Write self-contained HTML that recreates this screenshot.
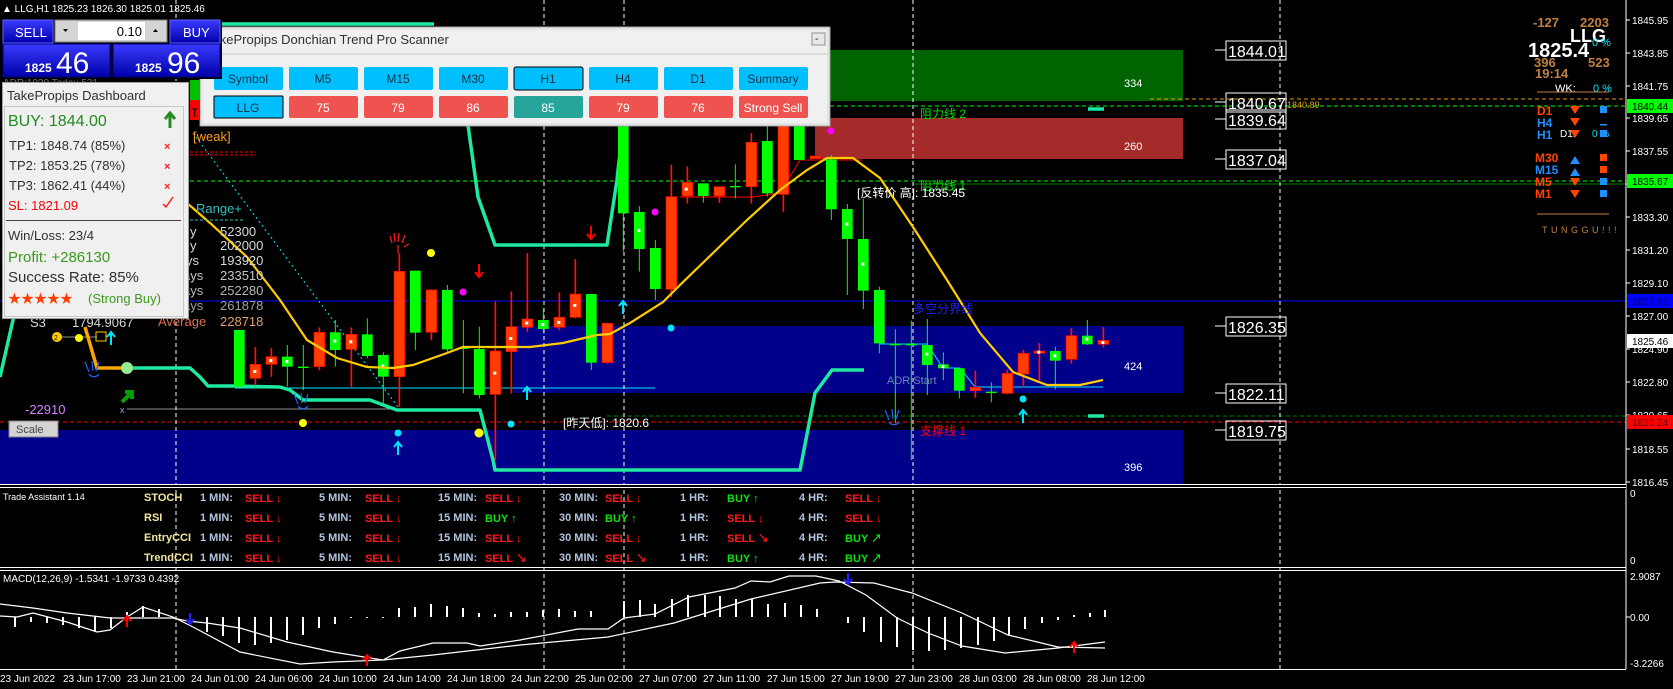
<!DOCTYPE html>
<html><head><meta charset="utf-8"><style>
html,body{margin:0;padding:0;background:#000;}
svg{display:block;}
text{font-family:"Liberation Sans","Noto Sans CJK SC",sans-serif;}
</style></head><body>
<svg width="1673" height="689" viewBox="0 0 1673 689" xmlns="http://www.w3.org/2000/svg">
<rect width="1673" height="689" fill="#000"/>

<rect x="200" y="50" width="983" height="51" fill="#006400"/>
<rect x="815" y="118" width="368" height="41" fill="#a52a2a"/>
<rect x="513" y="326" width="670" height="67" fill="#00008b"/>
<rect x="0" y="430" width="1183" height="54" fill="#00008b"/>
<g font-size="11" fill="#fff"><text x="1124" y="87">334</text><text x="1124" y="150">260</text><text x="1124" y="370">424</text><text x="1124" y="471">396</text></g>

<line x1="0" y1="301" x2="1626" y2="301" stroke="#0000ff" stroke-width="1"/>
<line x1="190" y1="181" x2="1626" y2="181" stroke="#00ff00" stroke-dasharray="4,3"/>
<line x1="913" y1="184" x2="1626" y2="184" stroke="#008000"/>
<line x1="830" y1="106" x2="1626" y2="106" stroke="#00ff00" stroke-dasharray="4,3"/>
<line x1="1150" y1="99" x2="1626" y2="99" stroke="#e0a000" stroke-dasharray="4,3"/>
<line x1="0" y1="422" x2="1626" y2="422" stroke="#ff0000" stroke-dasharray="4,3"/>
<line x1="607" y1="416" x2="1626" y2="416" stroke="#008000" stroke-dasharray="4,3"/>
<line x1="190" y1="152" x2="256" y2="152" stroke="#ff0000" stroke-dasharray="3,2"/>
<line x1="190" y1="155" x2="256" y2="155" stroke="#ff0000" stroke-dasharray="3,2"/>
<line x1="127" y1="409" x2="397" y2="409" stroke="#909090"/>
<line x1="62" y1="337" x2="97" y2="337" stroke="#909090"/>
<line x1="235" y1="388" x2="655" y2="388" stroke="#00e5ff"/>
<polyline points="880,344 927,344 943,368 960,368 975,387 1103,387" fill="none" stroke="#00e5ff"/>
<polyline points="680,197 753,197 780,193 800,160 862,160" fill="none" stroke="#ff0000"/>
<line x1="193" y1="133" x2="398" y2="407" stroke="#00e5ff" stroke-dasharray="2,3"/>

<g stroke="#fff" stroke-dasharray="4,3">
<line x1="176" y1="0" x2="176" y2="669"/><line x1="544" y1="0" x2="544" y2="669"/>
<line x1="624" y1="0" x2="624" y2="669"/><line x1="913" y1="0" x2="913" y2="669"/>
<line x1="1280" y1="0" x2="1280" y2="669"/></g>

<g fill="none" stroke="#1de9a0" stroke-width="3.5" stroke-linejoin="round">
<polyline points="0,377 13,320 22,260"/>
<polyline points="127,368 190,368 200,377 208,386 233,386 280,387 290,390 303,400 370,400 397,410 480,410 493,460 495,470 800,470 802,460 815,393 832,370 864,370"/>
<polyline points="468,125 478,197 495,245 607,245 617,180 623,125"/>
<line x1="222" y1="24" x2="434" y2="24"/>
<line x1="1088" y1="109" x2="1104" y2="109"/><line x1="1088" y1="416" x2="1104" y2="416"/>
</g>
<polyline points="85,327 97,368 127,368" fill="none" stroke="#ffa500" stroke-width="3.5"/>
<circle cx="127" cy="368" r="6" fill="#90ee90"/>

<g transform="translate(180,100) scale(0.33333)">
<g fill="#00ff00">
<rect x="162" y="690" width="32" height="170"/>
<rect x="320.5" y="735" width="3" height="125"/><rect x="306" y="770" width="32" height="30"/>
<rect x="368.5" y="735" width="3" height="135"/><rect x="354" y="800" width="32" height="4"/>
<rect x="464.5" y="660" width="3" height="140"/><rect x="450" y="697" width="32" height="53"/>
<rect x="560.5" y="655" width="3" height="120"/><rect x="546" y="703" width="32" height="65"/>
<rect x="608.5" y="757" width="3" height="153"/><rect x="594" y="765" width="32" height="65"/>
<rect x="704.5" y="512" width="3" height="238"/><rect x="690" y="512" width="32" height="186"/>
<rect x="800.5" y="555" width="3" height="200"/><rect x="786" y="570" width="32" height="178"/>
<rect x="848.5" y="660" width="3" height="220"/><rect x="834" y="743" width="32" height="4"/>
<rect x="896.5" y="680" width="3" height="215"/><rect x="882" y="747" width="32" height="138"/>
<rect x="1088.5" y="625" width="3" height="75"/><rect x="1074" y="660" width="32" height="27"/>
<rect x="1232.5" y="582" width="3" height="228"/><rect x="1218" y="582" width="32" height="206"/>
<rect x="1328.5" y="75" width="3" height="380"/><rect x="1314" y="75" width="32" height="265"/>
<rect x="1376.5" y="318" width="3" height="197"/><rect x="1362" y="336" width="32" height="111"/>
<rect x="1424.5" y="420" width="3" height="180"/><rect x="1410" y="444" width="32" height="123"/>
</g>
<g fill="#ff3d00" stroke="#ff0000" stroke-width="2">
<rect x="224.5" y="742" width="3" height="113"/><rect x="210" y="793" width="32" height="42"/>
<rect x="272.5" y="745" width="3" height="85"/><rect x="258" y="770" width="32" height="23"/>
<rect x="416.5" y="683" width="3" height="127"/><rect x="402" y="697" width="32" height="103"/>
<rect x="512.5" y="683" width="3" height="177"/><rect x="498" y="703" width="32" height="45"/>
<rect x="656.5" y="460" width="3" height="460"/><rect x="642" y="514" width="32" height="316"/>
<rect x="752.5" y="568" width="3" height="152"/><rect x="738" y="570" width="32" height="127"/>
<rect x="944.5" y="605" width="3" height="475"/><rect x="930" y="753" width="32" height="130"/>
<rect x="992.5" y="575" width="3" height="305"/><rect x="978" y="680" width="32" height="75"/>
<rect x="1040.5" y="460" width="3" height="235"/><rect x="1026" y="657" width="32" height="25"/>
<rect x="1136.5" y="578" width="3" height="112"/><rect x="1122" y="652" width="32" height="30"/>
<rect x="1184.5" y="478" width="3" height="177"/><rect x="1170" y="582" width="32" height="70"/>
<rect x="1280.5" y="668" width="3" height="122"/><rect x="1266" y="670" width="32" height="118"/>
<rect x="1472.5" y="195" width="3" height="395"/><rect x="1458" y="290" width="32" height="278"/>
</g>
<g fill="#fff"><rect x="220" y="810" width="9" height="9"/><rect x="268" y="777" width="9" height="9"/><rect x="316" y="780" width="9" height="9"/><rect x="460" y="719" width="9" height="9"/><rect x="508" y="721" width="9" height="9"/><rect x="604" y="793" width="9" height="9"/><rect x="940" y="815" width="9" height="9"/><rect x="988" y="711" width="9" height="9"/><rect x="1036" y="665" width="9" height="9"/><rect x="1084" y="669" width="9" height="9"/><rect x="1132" y="663" width="9" height="9"/><rect x="1180" y="612" width="9" height="9"/><rect x="1372" y="387" width="9" height="9"/></g>
</g>

<g transform="translate(680,100) scale(0.33333)">
<g fill="#00ff00">
<rect x="68.5" y="250" width="3" height="58"/><rect x="54" y="250" width="32" height="38"/>
<rect x="164.5" y="193" width="3" height="102"/><rect x="150" y="258" width="32" height="4"/>
<rect x="260.5" y="75" width="3" height="215"/><rect x="246" y="123" width="32" height="157"/>
<rect x="356.5" y="75" width="3" height="105"/><rect x="342" y="75" width="32" height="105"/>
<rect x="452.5" y="165" width="3" height="195"/><rect x="438" y="178" width="32" height="150"/>
<rect x="500.5" y="312" width="3" height="273"/><rect x="486" y="327" width="32" height="90"/>
<rect x="548.5" y="297" width="3" height="330"/><rect x="534" y="417" width="32" height="155"/>
<rect x="596.5" y="560" width="3" height="200"/><rect x="582" y="570" width="32" height="160"/>
<rect x="644.5" y="688" width="3" height="282"/><rect x="630" y="731" width="32" height="5"/>
<rect x="692.5" y="662" width="3" height="418"/><rect x="678" y="731" width="32" height="5"/>
<rect x="740.5" y="657" width="3" height="228"/><rect x="726" y="735" width="32" height="60"/>
<rect x="788.5" y="757" width="3" height="83"/><rect x="774" y="793" width="32" height="12"/>
<rect x="836.5" y="805" width="3" height="90"/><rect x="822" y="805" width="32" height="67"/>
<rect x="932.5" y="847" width="3" height="60"/><rect x="918" y="875" width="32" height="4"/>
<rect x="1124.5" y="740" width="3" height="128"/><rect x="1110" y="753" width="32" height="29"/>
<rect x="1220.5" y="660" width="3" height="75"/><rect x="1206" y="707" width="32" height="26"/>
</g>
<g fill="#ff3d00" stroke="#ff0000" stroke-width="2">
<rect x="20.5" y="200" width="3" height="110"/><rect x="6" y="247" width="32" height="41"/>
<rect x="116.5" y="260" width="3" height="48"/><rect x="102" y="260" width="32" height="28"/>
<rect x="212.5" y="100" width="3" height="210"/><rect x="198" y="127" width="32" height="133"/>
<rect x="308.5" y="75" width="3" height="260"/><rect x="294" y="75" width="32" height="208"/>
<rect x="390" y="168" width="32" height="8"/>
<rect x="884.5" y="813" width="3" height="80"/><rect x="870" y="862" width="32" height="10"/>
<rect x="980.5" y="810" width="3" height="72"/><rect x="966" y="820" width="32" height="60"/>
<rect x="1028.5" y="750" width="3" height="110"/><rect x="1014" y="760" width="32" height="62"/>
<rect x="1076.5" y="730" width="3" height="110"/><rect x="1062" y="753" width="32" height="7"/>
<rect x="1172.5" y="685" width="3" height="105"/><rect x="1158" y="707" width="32" height="71"/>
<rect x="1268.5" y="682" width="3" height="60"/><rect x="1254" y="721" width="32" height="12"/>
</g>
<g fill="#fff"><rect x="14" y="263" width="9" height="9"/><rect x="496" y="368" width="9" height="9"/><rect x="544" y="488" width="9" height="9"/><rect x="736" y="758" width="9" height="9"/><rect x="784" y="795" width="9" height="9"/><rect x="1216" y="713" width="9" height="9"/><rect x="1264" y="723" width="9" height="9"/><rect x="1120" y="763" width="9" height="9"/><rect x="1072" y="752" width="9" height="9"/></g>
</g>

<g fill="none" stroke="#ffcc00" stroke-width="2.2">
<polyline points="187,203 210,223 247,257 280,300 307,340 337,358 367,367 393,368 413,365 447,353 463,347 497,347 530,347 563,343 597,335 610,334 630,323 663,302 680,285 713,253 747,220 780,190 807,170 827,158 853,158 880,178 913,227 947,280 980,333 1013,372 1047,385 1080,385 1103,380"/>
</g>

<g>
<circle cx="431" cy="253" r="4" fill="#ffff00"/><circle cx="303" cy="423" r="4" fill="#ffff00"/><circle cx="479" cy="433" r="4.5" fill="#ffff00"/>
<circle cx="463" cy="292" r="3.5" fill="#ff00ff"/><circle cx="655" cy="212" r="3.5" fill="#ff00ff"/><circle cx="831" cy="131" r="3.5" fill="#ff00ff"/>
<circle cx="398" cy="433" r="3.5" fill="#00e5ff"/><circle cx="511" cy="424" r="3.5" fill="#00e5ff"/><circle cx="671" cy="328" r="3.5" fill="#00e5ff"/><circle cx="1023" cy="399" r="3.5" fill="#00e5ff"/>
<g fill="none" stroke="#00e5ff" stroke-width="2"><path d="M398,455v-12m-4,4l4,-5l4,5"/><path d="M527,400v-12m-4,4l4,-5l4,5"/><path d="M623,314v-12m-4,4l4,-5l4,5"/><path d="M1023,423v-12m-4,4l4,-5l4,5"/><path d="M111,345v-12m-4,4l4,-5l4,5"/></g>
<g fill="none" stroke="#ff0000" stroke-width="2"><path d="M479,264v12m-4,-4l4,5l4,-5"/><path d="M591,226v12m-4,-4l4,5l4,-5"/></g>
<path d="M398,253v-8m-6,-2l-2,-7m5,6l-1,-9m4,9l1,-9m3,10l3,-8m-1,12l5,-3" stroke="#ff2020" fill="none" stroke-width="1.2"/>
<g stroke="#2060ff" fill="none" stroke-width="1.2"><path d="M298,404l-4,-10m8,9l-1,-10m4,10l3,-9m-10,12a6,6 0 0 0 10,0"/><path d="M889,420l-4,-10m8,9l-1,-10m4,10l3,-9m-10,12a6,6 0 0 0 10,0"/><path d="M89,372l-4,-10m8,9l-1,-10m4,10l3,-9m-10,12a6,6 0 0 0 10,0"/></g>
<path d="M122,402l10,-10m-7,0h7v7" stroke="#00a000" stroke-width="4" fill="none"/>
<circle cx="57" cy="337" r="5" fill="#ffcc00"/><text x="54" y="340" font-size="7" fill="#000">2</text>
<circle cx="79" cy="338" r="4" fill="#ffff00"/>
<rect x="96" y="332" width="10" height="9" fill="none" stroke="#ffcc00"/>
<text x="120" y="413" font-size="9" fill="#d080ff">x</text>
</g>

<g font-size="13">
<text x="193" y="141" fill="#ff9f20">[weak]</text>
<text x="196" y="213" fill="#30c0c0">Range+</text>
<line x1="190" y1="220" x2="244" y2="220" stroke="#30c0c0" stroke-dasharray="3,2"/>
<text x="220" y="236" fill="#d8d8d8">52300</text><text x="220" y="250" fill="#d8d8d8">202000</text><text x="220" y="265" fill="#d8d8d8">193920</text>
<text x="220" y="280" fill="#c8c8c8">233510</text><text x="220" y="295" fill="#b8b8b8">252280</text><text x="220" y="310" fill="#a0a0a0">261878</text>
<text x="220" y="326" fill="#e0a070">228718</text><text x="158" y="326" fill="#e07050">Average</text>
<text x="190" y="236" fill="#d8d8d8">y</text><text x="190" y="250" fill="#d8d8d8">y</text><text x="186" y="265" fill="#d8d8d8">ys</text><text x="183" y="280" fill="#c8c8c8">ays</text><text x="183" y="295" fill="#b8b8b8">ays</text><text x="183" y="310" fill="#a0a0a0">ays</text>
<text x="30" y="327" fill="#d8d8d8">S3</text><text x="72" y="327" fill="#d8d8d8">1794.9067</text>
<text x="25" y="414" fill="#d080ff">-22910</text>
<text x="920" y="118" fill="#00e000" font-size="12">阻力线 2</text>
<text x="920" y="190" fill="#00e000" font-size="12">阻力线 1</text>
<text x="857" y="197" fill="#fff" font-size="12">[反转价 高]: 1835.45</text>
<text x="913" y="313" fill="#2020ff" font-size="12">多空分界线</text>
<text x="887" y="384" fill="#7088b0" font-size="11">ADR Start</text>
<text x="920" y="435" fill="#ff0000" font-size="12">支撑线 1</text>
<text x="563" y="427" fill="#fff" font-size="12">[昨天低]: 1820.6</text>
</g>
<rect x="9" y="421" width="49" height="16" fill="#d4d4d4" stroke="#808080"/>
<text x="16" y="433" font-size="11" fill="#444">Scale</text>

<g font-size="16" fill="#fff">
<g stroke="#fff" fill="none">
<rect x="1226" y="41" width="60" height="19"/><rect x="1226" y="93" width="60" height="19"/><rect x="1226" y="110" width="60" height="19"/><rect x="1226" y="150" width="60" height="19"/><rect x="1226" y="317" width="60" height="19"/><rect x="1226" y="384" width="60" height="19"/><rect x="1226" y="421" width="60" height="19"/>
<path d="M1215,50h11M1215,102h11M1215,119h11M1215,159h11M1215,326h11M1215,393h11M1215,430h11"/></g>
<text x="1228" y="57">1844.01</text><text x="1228" y="109">1840.67</text><text x="1228" y="126">1839.64</text><text x="1228" y="166">1837.04</text><text x="1228" y="333">1826.35</text><text x="1228" y="400">1822.11</text><text x="1228" y="437">1819.75</text>
</g>
<text x="1287" y="108" font-size="9" fill="#e0a000">1840.89</text>

<g font-size="13" fill="#c08040" font-weight="bold">
<text x="1533" y="27">-127</text><text x="1580" y="27">2203</text>
<text x="1534" y="67">396</text><text x="1588" y="67">523</text><text x="1535" y="78">19:14</text>
</g>
<text x="1570" y="42" font-size="18" font-weight="bold" fill="#fff">LLG</text>
<text x="1528" y="57" font-size="20" font-weight="bold" fill="#fff">1825.4</text>
<text x="1592" y="46" font-size="11" fill="#00e5ff">0 %</text>
<text x="1555" y="92" font-size="11" fill="#fff">WK:</text><text x="1593" y="92" font-size="11" fill="#00e5ff">0 %</text>
<line x1="1537" y1="92" x2="1609" y2="92" stroke="#c08040"/>
<g font-size="12" font-weight="bold">
<text x="1537" y="115" fill="#ff4500">D1</text><text x="1537" y="127" fill="#1e90ff">H4</text><text x="1537" y="139" fill="#1e90ff">H1</text>
<text x="1535" y="162" fill="#ff4500">M30</text><text x="1535" y="174" fill="#1e90ff">M15</text><text x="1535" y="186" fill="#ff4500">M5</text><text x="1535" y="198" fill="#ff4500">M1</text>
</g>
<text x="1560" y="137" font-size="10" fill="#fff">D1:</text><text x="1592" y="137" font-size="10" fill="#00e5ff">0 %</text>
<g fill="#ff4500"><path d="M1570,106h10l-5,8z"/><path d="M1570,118h10l-5,8z"/><path d="M1570,130h10l-5,8z"/><path d="M1570,178h10l-5,8z"/><path d="M1570,190h10l-5,8z"/></g>
<g fill="#1e90ff"><path d="M1570,164h10l-5,-8z"/><path d="M1570,176h10l-5,-8z"/></g>
<g fill="#1e90ff"><rect x="1600" y="106" width="7" height="7"/><rect x="1600" y="124" width="7" height="1.5"/><rect x="1600" y="130" width="7" height="7"/><rect x="1600" y="178" width="7" height="7"/><rect x="1600" y="190" width="7" height="7"/></g>
<g fill="#ff4500"><rect x="1600" y="154" width="7" height="7"/><rect x="1600" y="166" width="7" height="7"/></g>
<line x1="1537" y1="214" x2="1609" y2="214" stroke="#c08040"/>
<text x="1542" y="233" font-size="9" fill="#c08040" letter-spacing="3.5">TUNGGU!!!</text>

<rect x="1626" y="0" width="47" height="689" fill="#000"/>
<line x1="1626" y1="0" x2="1626" y2="669" stroke="#fff"/>
<g font-size="10" fill="#fff">
<text x="1632" y="24">1845.95</text><text x="1632" y="57">1843.85</text><text x="1632" y="90">1841.75</text><text x="1632" y="122">1839.65</text><text x="1632" y="155">1837.55</text><text x="1632" y="188">1835.45</text><text x="1632" y="221">1833.30</text><text x="1632" y="254">1831.20</text><text x="1632" y="287">1829.10</text><text x="1632" y="320">1827.00</text><text x="1632" y="353">1824.90</text><text x="1632" y="386">1822.80</text><text x="1632" y="419">1820.65</text><text x="1632" y="453">1818.55</text><text x="1632" y="486">1816.45</text>
<text x="1630" y="497">0</text><text x="1630" y="564">0</text>
<text x="1630" y="580">2.9087</text><text x="1630" y="621">0.00</text><text x="1630" y="667">-3.2266</text>
</g>
<g stroke="#fff"><path d="M1626,20h4M1626,53h4M1626,86h4M1626,118h4M1626,151h4M1626,184h4M1626,217h4M1626,250h4M1626,283h4M1626,316h4M1626,349h4M1626,382h4M1626,415h4M1626,449h4M1626,482h4M1626,617h4"/></g>
<rect x="1627" y="99" width="46" height="14" fill="#00ff00"/><text x="1632" y="110" font-size="10" fill="#000">1840.44</text>
<rect x="1627" y="174" width="46" height="14" fill="#00ff00"/><text x="1632" y="185" font-size="10" fill="#000">1835.67</text>
<rect x="1627" y="294" width="46" height="14" fill="#0000ff"/><text x="1632" y="305" font-size="10" fill="#000060">1827.95</text>
<rect x="1627" y="334" width="46" height="14" fill="#fff"/><text x="1632" y="345" font-size="10" fill="#000">1825.46</text>
<rect x="1627" y="415" width="46" height="14" fill="#ff0000"/><text x="1632" y="426" font-size="10" fill="#600">1820.24</text>

<rect x="0" y="484" width="1626" height="5" fill="#000"/>
<line x1="0" y1="484.5" x2="1626" y2="484.5" stroke="#fff"/><line x1="0" y1="487.5" x2="1626" y2="487.5" stroke="#fff"/>
<line x1="0" y1="567.5" x2="1626" y2="567.5" stroke="#fff"/><line x1="0" y1="570.5" x2="1626" y2="570.5" stroke="#fff"/>
<line x1="0" y1="669.5" x2="1626" y2="669.5" stroke="#fff"/>

<text x="3" y="500" font-size="9" fill="#fff">Trade Assistant 1.14</text>
<g font-size="11" font-weight="bold">
<g fill="#f0e6a0"><text x="144" y="501">STOCH</text><text x="144" y="521">RSI</text><text x="144" y="541">EntryCCI</text><text x="144" y="561">TrendCCI</text></g>
<g fill="#b0c4de">
<text x="200" y="501">1 MIN:</text><text x="319" y="501">5 MIN:</text><text x="438" y="501">15 MIN:</text><text x="559" y="501">30 MIN:</text><text x="680" y="501">1 HR:</text><text x="799" y="501">4 HR:</text>
<text x="200" y="521">1 MIN:</text><text x="319" y="521">5 MIN:</text><text x="438" y="521">15 MIN:</text><text x="559" y="521">30 MIN:</text><text x="680" y="521">1 HR:</text><text x="799" y="521">4 HR:</text>
<text x="200" y="541">1 MIN:</text><text x="319" y="541">5 MIN:</text><text x="438" y="541">15 MIN:</text><text x="559" y="541">30 MIN:</text><text x="680" y="541">1 HR:</text><text x="799" y="541">4 HR:</text>
<text x="200" y="561">1 MIN:</text><text x="319" y="561">5 MIN:</text><text x="438" y="561">15 MIN:</text><text x="559" y="561">30 MIN:</text><text x="680" y="561">1 HR:</text><text x="799" y="561">4 HR:</text>
</g>
<g fill="#ff1a1a">
<text x="245" y="502">SELL ↓</text><text x="365" y="502">SELL ↓</text><text x="485" y="502">SELL ↓</text><text x="605" y="502">SELL ↓</text><text x="845" y="502">SELL ↓</text>
<text x="245" y="522">SELL ↓</text><text x="365" y="522">SELL ↓</text><text x="727" y="522">SELL ↓</text><text x="845" y="522">SELL ↓</text>
<text x="245" y="542">SELL ↓</text><text x="365" y="542">SELL ↓</text><text x="485" y="542">SELL ↓</text><text x="605" y="542">SELL ↓</text><text x="727" y="542">SELL ↘</text>
<text x="245" y="562">SELL ↓</text><text x="365" y="562">SELL ↓</text><text x="485" y="562">SELL ↘</text><text x="605" y="562">SELL ↘</text>
</g>
<g fill="#10e010">
<text x="727" y="502">BUY ↑</text><text x="485" y="522">BUY ↑</text><text x="605" y="522">BUY ↑</text><text x="845" y="542">BUY ↗</text><text x="727" y="562">BUY ↑</text><text x="845" y="562">BUY ↗</text>
</g>
</g>

<text x="3" y="582" font-size="10" fill="#fff">MACD(12,26,9) -1.5341 -1.9733 0.4392</text>
<g stroke="#fff" stroke-width="2">
<path d="M15,617v10M31,617v5M47,617v6M63,617v8M79,617v11M95,617v15M111,617v11M127,617v-5M143,617v-11M159,617v-8M207,617v15M223,617v19M239,617v26M255,617v28M271,617v26M287,617v23M303,617v18M319,617v11M335,617v7M351,617v1M367,617v1M383,617v1M399,617v-9M415,617v-10M431,617v-13M447,617v-11M463,617v-9M479,617v-4M495,617v-3M511,617v-5"/>
<path d="M527,617v-5M543,617v-7M559,617v-8M575,617v-6M591,617v-6M624,617v-16M640,617v-17M655,617v-13M672,617v-18M688,617v-22M705,617v-22M720,617v-21M736,617v-18M752,617v-18M768,617v-13M785,617v-14M801,617v-12M817,617v-8M848,617v6M864,617v15M881,617v25M897,617v30M913,617v33M929,617v34M945,617v33M961,617v31M978,617v28M994,617v24M1009,617v18M1025,617v12M1042,617v6M1058,617v3M1074,617v-2M1090,617v-4M1105,617v-7"/>
</g>
<g fill="none" stroke="#fff" stroke-width="1.2">
<polyline points="0,604 33,608 67,613 110,618 173,618 187,621 207,623 240,628 287,642 333,652 383,660 433,655 520,645 608,637 674,623 751,599 820,583 835,582 874,583 912,593 962,613 1008,635 1058,647 1105,648"/>
<polyline points="0,616 17,617 33,613 67,622 97,632 110,630 127,617 143,607 173,617 193,627 240,652 300,664 333,662 383,660 400,651 433,643 467,643 480,646 520,640 578,629 608,629 624,618 655,614 689,597 735,588 751,581 770,582 789,576 816,576 839,581 866,595 897,618 928,633 962,646 1005,653 1058,648 1105,642"/>
</g>
<path d="M127,627v-10m-4,4l4,-5l4,5" stroke="#ff0000" stroke-width="2" fill="none"/>
<path d="M367,666v-10m-4,4l4,-5l4,5" stroke="#ff0000" stroke-width="2" fill="none"/>
<path d="M1074,653v-10m-4,4l4,-5l4,5" stroke="#ff0000" stroke-width="2" fill="none"/>
<path d="M190,613v10m-4,-4l4,5l4,-5" stroke="#2020ff" stroke-width="2" fill="none"/>
<path d="M848,573v10m-4,-4l4,5l4,-5" stroke="#2020ff" stroke-width="2" fill="none"/>

<g font-size="10" fill="#fff">
<text x="0" y="682">23 Jun 2022</text><text x="63" y="682">23 Jun 17:00</text><text x="127" y="682">23 Jun 21:00</text><text x="191" y="682">24 Jun 01:00</text><text x="255" y="682">24 Jun 06:00</text><text x="319" y="682">24 Jun 10:00</text><text x="383" y="682">24 Jun 14:00</text><text x="447" y="682">24 Jun 18:00</text><text x="511" y="682">24 Jun 22:00</text><text x="575" y="682">25 Jun 02:00</text><text x="639" y="682">27 Jun 07:00</text><text x="703" y="682">27 Jun 11:00</text><text x="767" y="682">27 Jun 15:00</text><text x="831" y="682">27 Jun 19:00</text><text x="895" y="682">27 Jun 23:00</text><text x="959" y="682">28 Jun 03:00</text><text x="1023" y="682">28 Jun 08:00</text><text x="1087" y="682">28 Jun 12:00</text>
</g>

<rect x="200" y="27" width="630" height="99" fill="#f0f0f0" stroke="#a0a0a0"/>
<rect x="202" y="29" width="626" height="95" fill="none" stroke="#d8d8d8"/>
<line x1="202" y1="54" x2="828" y2="54" stroke="#c8c8c8"/>
<text x="206" y="44" font-size="13" fill="#303030">TakePropips Donchian Trend Pro Scanner</text>
<rect x="812" y="33" width="13" height="12" fill="#e8e8e8" stroke="#909090"/><text x="815" y="42" font-size="10" fill="#000">-</text>
<g font-size="12" text-anchor="middle">
<rect x="214" y="67" width="69" height="23" rx="2" fill="#00bfff"/><text x="248" y="83" fill="#1a3040">Symbol</text>
<rect x="289" y="67" width="69" height="23" rx="2" fill="#00bfff"/><text x="323" y="83" fill="#1a3040">M5</text>
<rect x="364" y="67" width="69" height="23" rx="2" fill="#00bfff"/><text x="398" y="83" fill="#1a3040">M15</text>
<rect x="439" y="67" width="69" height="23" rx="2" fill="#00bfff"/><text x="473" y="83" fill="#1a3040">M30</text>
<rect x="514" y="67" width="69" height="23" rx="2" fill="#00bfff" stroke="#000"/><text x="548" y="83" fill="#1a3040">H1</text>
<rect x="589" y="67" width="69" height="23" rx="2" fill="#00bfff"/><text x="623" y="83" fill="#1a3040">H4</text>
<rect x="664" y="67" width="69" height="23" rx="2" fill="#00bfff"/><text x="698" y="83" fill="#1a3040">D1</text>
<rect x="739" y="67" width="69" height="23" rx="2" fill="#00bfff"/><text x="773" y="83" fill="#1a3040">Summary</text>
<rect x="214" y="96" width="69" height="22" rx="1" fill="#00bfff" stroke="#000"/><text x="248" y="112" fill="#1a3040">LLG</text>
<rect x="289" y="96" width="69" height="22" rx="2" fill="#ef5350"/><text x="323" y="112" fill="#fff">75</text>
<rect x="364" y="96" width="69" height="22" rx="2" fill="#ef5350"/><text x="398" y="112" fill="#fff">79</text>
<rect x="439" y="96" width="69" height="22" rx="2" fill="#ef5350"/><text x="473" y="112" fill="#fff">86</text>
<rect x="514" y="96" width="69" height="22" rx="2" fill="#26a69a"/><text x="548" y="112" fill="#fff">85</text>
<rect x="589" y="96" width="69" height="22" rx="2" fill="#ef5350"/><text x="623" y="112" fill="#fff">79</text>
<rect x="664" y="96" width="69" height="22" rx="2" fill="#ef5350"/><text x="698" y="112" fill="#fff">76</text>
<rect x="739" y="96" width="69" height="22" rx="2" fill="#ef5350"/><text x="773" y="112" fill="#fff">Strong Sell</text>
</g>

<text x="2" y="12" font-size="10" fill="#fff">▲ LLG,H1  1825.23 1826.30 1825.01 1825.46</text>
<text x="3" y="86" font-size="10" fill="#707070">ADR:1939  Today 531</text>
<rect x="190" y="100" width="10" height="20" fill="#ff0000"/><text x="191" y="117" font-size="12" fill="#000">T</text>
<rect x="190" y="80" width="10" height="20" fill="#00c000"/>

<defs><linearGradient id="bg" x1="0" y1="0" x2="0" y2="1"><stop offset="0" stop-color="#3a3aff"/><stop offset="1" stop-color="#0000a8"/></linearGradient></defs>
<rect x="2" y="19" width="220" height="60" fill="#000"/>
<rect x="3" y="20" width="50" height="23" fill="url(#bg)" stroke="#6060ff"/><text x="15" y="37" font-size="13" fill="#fff">SELL</text>
<rect x="170" y="20" width="50" height="23" fill="url(#bg)" stroke="#6060ff"/><text x="183" y="37" font-size="13" fill="#fff">BUY</text>
<rect x="55" y="20" width="112" height="22" fill="#d4d4d4" stroke="#808080"/>
<rect x="78" y="22" width="67" height="18" fill="#fff"/>
<text x="142" y="36" font-size="13" fill="#000" text-anchor="end">0.10</text>
<path d="M63,29h5l-2.5,3z" fill="#000"/><path d="M153,32h5l-2.5,-3z" fill="#000"/>
<rect x="3" y="44" width="107" height="33" fill="url(#bg)" stroke="#000080"/>
<rect x="113" y="44" width="107" height="33" fill="url(#bg)" stroke="#000080"/>
<text x="25" y="72" font-size="12" font-weight="bold" fill="#fff">1825</text><text x="56" y="73" font-size="30" fill="#fff">46</text>
<text x="135" y="72" font-size="12" font-weight="bold" fill="#fff">1825</text><text x="167" y="73" font-size="30" fill="#fff">96</text>

<rect x="2.5" y="82.5" width="186" height="236" fill="#f0f0f0" stroke="#a0a0a0"/>
<text x="7" y="100" font-size="13" fill="#303030">TakePropips Dashboard</text>
<rect x="4.5" y="106.5" width="179" height="210" fill="#f0f0f0" stroke="#c8c8c8"/>
<text x="8" y="126" font-size="16" fill="#228b22">BUY: 1844.00</text>
<path d="M170,128v-14m-5,5l5,-6l5,6" stroke="#228b22" stroke-width="3" fill="none"/>
<g font-size="13" fill="#303030"><text x="9" y="150">TP1: 1848.74 (85%)</text><text x="9" y="170">TP2: 1853.25 (78%)</text><text x="9" y="190">TP3: 1862.41 (44%)</text></g>
<g font-size="11" fill="#ff2020" font-weight="bold"><text x="164" y="150">×</text><text x="164" y="170">×</text><text x="164" y="190">×</text></g>
<text x="8" y="210" font-size="13" fill="#ff0000">SL:   1821.09</text>
<path d="M163,204l3,3l7,-10" stroke="#ff2020" stroke-width="1.5" fill="none"/>
<line x1="6" y1="220.5" x2="181" y2="220.5" stroke="#404040"/>
<text x="8" y="240" font-size="13" fill="#303030">Win/Loss: 23/4</text>
<text x="8" y="262" font-size="15" fill="#3a9a1a">Profit: +286130</text>
<text x="8" y="282" font-size="15" fill="#303030">Success Rate: 85%</text>
<text x="8" y="303" font-size="13" fill="#ff4000">★★★★★</text>
<text x="88" y="303" font-size="13" fill="#3a9a1a">(Strong Buy)</text>
</svg>
</body></html>
